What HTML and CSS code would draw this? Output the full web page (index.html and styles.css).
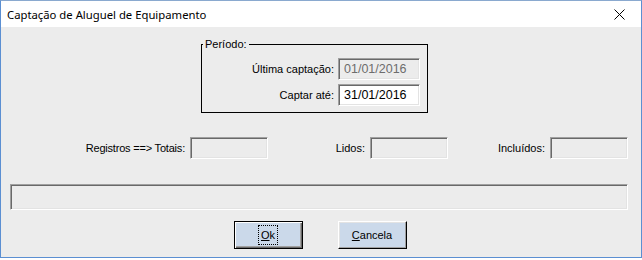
FILE: index.html
```html
<!DOCTYPE html>
<html lang="pt-BR">
<head>
    <meta charset="UTF-8">
    <title>Captação de Aluguel de Equipamento</title>
    <link rel="stylesheet" href="styles.css">
</head>
<body>
<div class="janela">
    <!-- barra de título -->
    <div class="titulo">
        <span class="titulo-texto">Captação de Aluguel de Equipamento</span>
        <span class="fechar">
            <svg width="11" height="11" viewBox="0 0 11 11">
                <path d="M0.5 0.5 L10.5 10.5 M10.5 0.5 L0.5 10.5" stroke="#000" stroke-width="1" fill="none"/>
            </svg>
        </span>
    </div>

    <div class="conteudo">
        <!-- período -->
        <fieldset class="periodo">
            <legend>Período:</legend>
            <div class="periodo-grade">
                <label for="ultima">Última captação:</label>
                <input type="text" id="ultima" value="01/01/2016" disabled>
                <label for="ate">Captar até:</label>
                <input type="text" id="ate" value="31/01/2016">
            </div>
        </fieldset>

        <!-- contadores -->
        <div class="registros">
            <div class="campo campo-totais">
                <span>Registros ==&gt; Totais:</span>
                <span class="caixa"></span>
            </div>
            <div class="campo">
                <span>Lidos:</span>
                <span class="caixa"></span>
            </div>
            <div class="campo">
                <span>Incluídos:</span>
                <span class="caixa"></span>
            </div>
        </div>

        <div class="progresso"></div>

        <div class="botoes">
            <button type="button" class="botao padrao"><span class="foco"><u>O</u>k</span></button>
            <button type="button" class="botao"><u>C</u>ancela</button>
        </div>
    </div>
</div>
</body>
</html>
```

FILE: styles.css
```css
body {
    margin: 0;
    padding: 0;
    background-color: #ffffff;
    font-family: "Liberation Sans", Arial, sans-serif;
    font-size: 11px;
    color: #000000;
}

/* janela */
.janela {
    width: 642px;
    height: 258px;
    box-sizing: border-box;
    border-left: 1px solid #5b8fd2;
    border-right: 1px solid #5b8fd2;
    border-bottom: 1px solid #5b8fd2;
    border-top: 1px solid #8aa9cf;
    display: flex;
    flex-direction: column;
    background-color: #ececec;
}

/* barra de título */
.titulo {
    height: 26px;
    display: flex;
    align-items: center;
    justify-content: space-between;
    background-color: #ffffff;
}
.titulo-texto {
    padding-left: 6px;
    font-family: "Noto Sans", "Open Sans", sans-serif;
    font-size: 11.3px;
    color: #000000;
}
.fechar {
    width: 44px;
    height: 26px;
    display: flex;
    align-items: center;
    justify-content: center;
}

.conteudo {
    flex: 1;
    display: flex;
    flex-direction: column;
}

/* grupo período */
.periodo {
    margin: 10px 0 0 200px;
    padding: 7px 7px 6px 0;
    width: 227px;
    box-sizing: border-box;
    border: 1px solid #000000;
}
.periodo legend {
    padding: 0 2px;
    margin-left: 1px;
    line-height: 14px;
}
.periodo-grade {
    display: grid;
    grid-template-columns: auto 82px;
    justify-content: end;
    align-items: center;
    column-gap: 4px;
    row-gap: 4px;
}
.periodo-grade label {
    text-align: right;
}
.periodo-grade input {
    width: 82px;
    height: 22px;
    box-sizing: border-box;
    margin: 0;
    padding: 0 0 0 5px;
    font-family: "Liberation Sans", Arial, sans-serif;
    font-size: 12.5px;
    color: #000000;
    background-color: #ffffff;
    border: 1px solid;
    border-color: #a0a0a0 #ffffff #ffffff #a0a0a0;
    box-shadow: inset 1px 1px 0 #696969, inset -1px -1px 0 #e3e3e3;
    outline: none;
}
.periodo-grade input:disabled {
    background-color: #ececec;
    color: #6d6d6d;
}

/* contadores */
.registros {
    display: flex;
    margin-top: 24px;
    padding-left: 9px;
}
.campo {
    width: 180px;
    display: flex;
    align-items: center;
    justify-content: flex-end;
    gap: 5px;
}
.campo-totais {
    width: 258px;
    letter-spacing: -0.2px;
}
.caixa {
    width: 78px;
    height: 22px;
    box-sizing: border-box;
    border: 1px solid;
    border-color: #a0a0a0 #ffffff #ffffff #a0a0a0;
    box-shadow: inset 1px 1px 0 #696969, inset -1px -1px 0 #e3e3e3;
}

/* barra de progresso */
.progresso {
    margin: 25px 0 0 9px;
    width: 618px;
    height: 26px;
    box-sizing: border-box;
    border: 1px solid;
    border-color: #a0a0a0 #ffffff #ffffff #a0a0a0;
    box-shadow: inset 1px 1px 0 #696969, inset -1px -1px 0 #e3e3e3;
}

/* botões */
.botoes {
    display: flex;
    justify-content: center;
    gap: 35px;
    margin-top: 11px;
    padding-right: 2px;
}
.botao {
    width: 69px;
    height: 28px;
    margin: 0;
    padding: 0;
    font-family: "Liberation Sans", Arial, sans-serif;
    font-size: 11px;
    color: #000000;
    background-color: #cbd9ea;
    border: 1px solid;
    border-color: #ffffff #000000 #000000 #ffffff;
    box-shadow: inset -1px -1px 0 #a0a0a0, inset 1px 1px 0 #e3e3e3;
}
.botao.padrao {
    border-color: #000000;
    box-shadow: inset 1px 1px 0 #ffffff, inset -1px -1px 0 #696969, inset -2px -2px 0 #a0a0a0;
}
.foco {
    display: inline-block;
    padding: 2px 2px;
    outline: 1px dotted #000000;
    line-height: 14px;
}
```
